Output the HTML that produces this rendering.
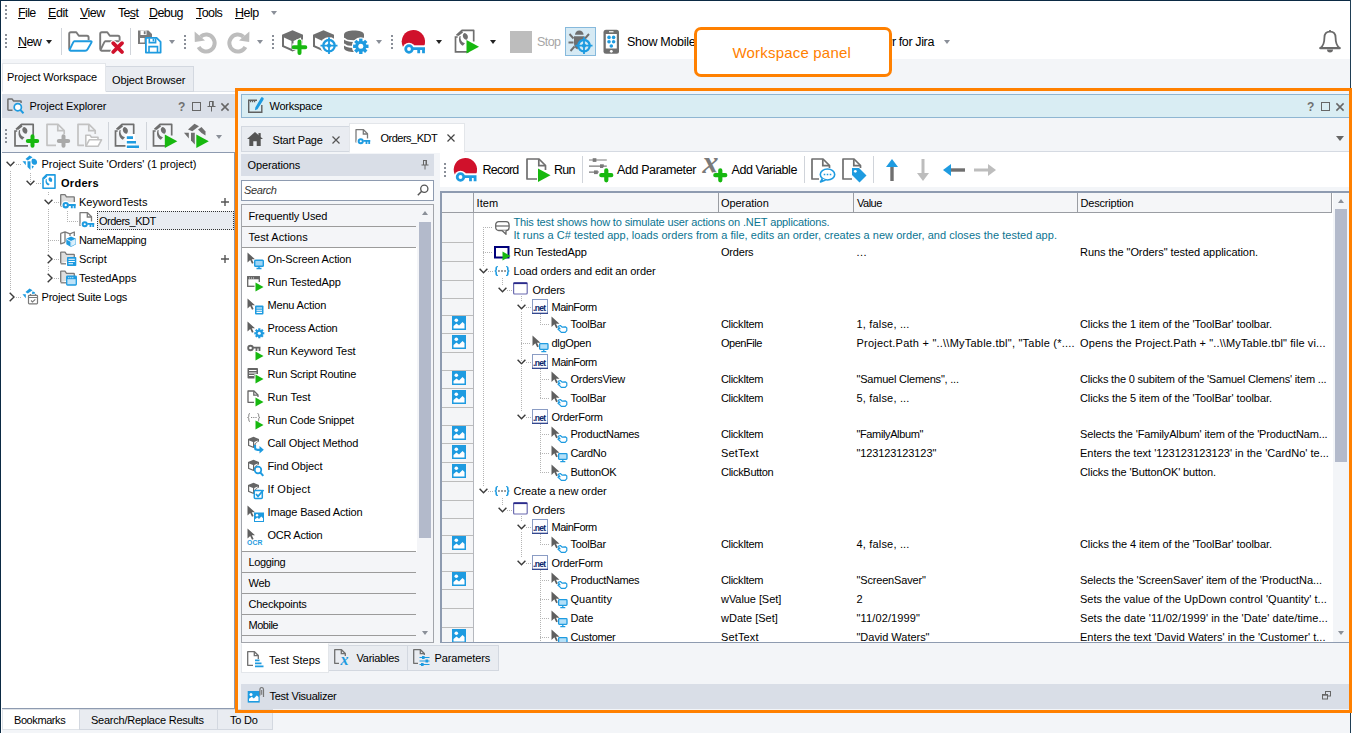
<!DOCTYPE html>
<html lang="en">
<head>
<meta charset="utf-8">
<title>Workspace panel</title>
<style>
*{box-sizing:border-box;margin:0;padding:0}
html,body{width:1352px;height:733px;overflow:hidden;background:#f3f5f8}
body{position:relative;font-family:"Liberation Sans",sans-serif;font-size:11px;color:#000;line-height:1}
.a{position:absolute}
.t{position:absolute;white-space:pre;line-height:14px;height:14px}
.m{font-size:12.5px;letter-spacing:-0.3px}
.ui{font-size:12.5px;letter-spacing:-0.3px}
svg{position:absolute;overflow:visible}
u{text-decoration:underline;text-underline-offset:1px}
.grip{position:absolute;width:2px;background-image:linear-gradient(#8a8f98 50%,transparent 50%);background-size:2px 4px}
.sep{position:absolute;width:1px;background:#d0d4da}
.dd{position:absolute;width:0;height:0;border-left:3.5px solid transparent;border-right:3.5px solid transparent;border-top:4px solid #222}
.dd.g{border-top-color:#8a8f98}
.hbar{position:absolute;background:#d9dee7}
.tab{position:absolute;background:#e9ecf1;border:1px solid #d3d8e0}
.tab.on{background:#fff;border-color:#e3e6ea;border-bottom-color:#fff}
.dot-h{position:absolute;height:1px;background-image:linear-gradient(90deg,#b4b4b4 50%,transparent 50%);background-size:2px 1px}
.dot-v{position:absolute;width:1px;background-image:linear-gradient(#b4b4b4 50%,transparent 50%);background-size:1px 2px}
.lsep{position:absolute;left:242px;width:174px;height:1px;background:#9b9b9b}
.gl{position:absolute;left:442px;width:31px;height:1px;background:#bcbcbc}
.c{color:#0b7491}
</style>
</head>
<body>
<!-- window frame -->
<div class="a" style="left:0;top:0;width:1352px;height:59px;background:#fff"></div>
<div class="a" style="left:0;top:0;width:1352px;height:1px;background:#0b2a44"></div>
<div class="a" style="left:0;top:0;width:1px;height:733px;background:#0b2a44"></div><div class="a" style="left:1px;top:1px;width:1px;height:732px;background:#fff"></div>
<div class="a" style="left:1350px;top:0;width:1px;height:733px;background:#1f3e55"></div><div class="a" style="left:1351px;top:0;width:1px;height:733px;background:#fff"></div>

<!-- MENU -->
<div id="menu">
<div class="grip" style="left:5px;top:5px;height:14px"></div>
<span class="t m" style="left:18px;top:6px;letter-spacing:-0.614px"><u>F</u>ile</span>
<span class="t m" style="left:48px;top:6px;letter-spacing:-0.462px"><u>E</u>dit</span>
<span class="t m" style="left:80px;top:6px;letter-spacing:-0.523px"><u>V</u>iew</span>
<span class="t m" style="left:118px;top:6px;letter-spacing:-0.700px">Te<u>s</u>t</span>
<span class="t m" style="left:149px;top:6px;letter-spacing:-0.569px"><u>D</u>ebug</span>
<span class="t m" style="left:196px;top:6px;letter-spacing:-0.588px"><u>T</u>ools</span>
<span class="t m" style="left:235px;top:6px;letter-spacing:-0.492px"><u>H</u>elp</span>
<div class="dd g" style="left:271px;top:11px"></div>
</div>

<!-- MAIN TOOLBAR -->
<div id="toolbar">
<div class="grip" style="left:5px;top:34px;height:16px"></div>
<span class="t m" style="left:18px;top:35px;letter-spacing:-0.589px"><u>N</u>ew</span>
<div class="dd" style="left:46px;top:40px"></div>
<div class="sep" style="left:61px;top:28px;height:27px"></div>
<div class="sep" style="left:130px;top:28px;height:27px"></div>
<!-- open folder -->
<svg style="left:68px;top:30px" width="25" height="24" viewBox="0 0 25 24"><path d="M1.2 19.5V3.8Q1.2 2.2 2.8 2.2H8.3L10.8 5.8H19Q20.6 5.800 20.6 7.4V10" fill="none" stroke="#7a7a7a" stroke-width="1.9" stroke-linejoin="round"/><path d="M6.3 11.2H22.6Q24.2 11.2 23.4 12.600L19.6 19.3Q18.800 20.7 17.2 20.7H2.6Q1 20.7 1.800 19.300L5.2 12.400Q5.800 11.200 6.3 11.200Z" fill="#fff" stroke="#1e9be0" stroke-width="1.9" stroke-linejoin="round"/></svg>
<!-- close folder -->
<svg style="left:99px;top:30px" width="25" height="24" viewBox="0 0 25 24"><path d="M1.2 19.5V3.8Q1.2 2.2 2.8 2.2H8.3L10.8 5.8H19Q20.6 5.800 20.6 7.4V10" fill="none" stroke="#7a7a7a" stroke-width="1.9" stroke-linejoin="round"/><path d="M12 20.700H2.6Q1 20.700 1.800 19.300L5.200 12.400Q5.800 11.200 6.300 11.200H22.600Q24.200 11.200 23.400 12.600" fill="none" stroke="#7a7a7a" stroke-width="1.9" stroke-linejoin="round"/><path d="M14.200 13.200L23 22M23 13.200L14.200 22" stroke="#fff" stroke-width="6" stroke-linecap="round"/><path d="M14.200 13.200L23 22M23 13.200L14.200 22" stroke="#d0112b" stroke-width="3.800" stroke-linecap="round"/></svg>
<!-- save all -->
<svg style="left:137px;top:29px" width="25" height="25" viewBox="0 0 25 25"><path d="M1 1.500H11.500L15 5V8H9V15H1Z" fill="#7a7a7a"/><rect x="3.500" y="1.500" width="6" height="4.500" fill="#fff"/><rect x="6.800" y="2.200" width="1.800" height="3" fill="#7a7a7a"/><rect x="3" y="9" width="4.500" height="4.500" fill="#fff"/><path d="M8.900 8.900H19.600L23.600 12.900V23.600H8.900Z" fill="#fff" stroke="#1e9be0" stroke-width="1.800" stroke-linejoin="round"/><path d="M12.300 9.500V13.600H18.600V9.500" fill="none" stroke="#1e9be0" stroke-width="1.600"/><rect x="15.600" y="9.800" width="1.600" height="2.600" fill="#1e9be0"/><path d="M12 23V17.600H20.500V23" fill="none" stroke="#1e9be0" stroke-width="1.600"/></svg>
<div class="dd g" style="left:169px;top:40px"></div>
<div class="grip" style="left:184px;top:35px;height:16px"></div>
<!-- undo -->
<svg style="left:194px;top:30px" width="24" height="24" viewBox="0 0 24 24"><path d="M6.500 6.700A8.500 8.500 0 1 1 4.600 17" fill="none" stroke="#bdbdbd" stroke-width="4"/><path d="M0.600 1.600L0.800 12L11 10.500Z" fill="#bdbdbd"/></svg>
<!-- redo -->
<svg style="left:226px;top:30px" width="24" height="24" viewBox="0 0 24 24"><g transform="translate(24,0) scale(-1,1)"><path d="M6.500 6.700A8.500 8.500 0 1 1 4.600 17" fill="none" stroke="#bdbdbd" stroke-width="4"/><path d="M0.600 1.600L0.800 12L11 10.500Z" fill="#bdbdbd"/></g></svg>
<div class="dd g" style="left:257px;top:40px"></div>
<div class="grip" style="left:272px;top:35px;height:16px"></div>
<!-- cube plus -->
<svg style="left:282px;top:30px" width="25" height="24" viewBox="0 0 25 24"><path d="M10.500 0.300L21 4.800V16.800L10.500 21.500L0 16.800V4.800Z" fill="#6f6f6f"/><path d="M2 7.600L9.500 10.900V18.700L2 15.400Z" fill="#fff"/><path d="M11.500 10.900L19 7.600V15.400L11.500 18.700Z" fill="#fff"/><path d="M17.500 9.500V24M10.300 16.800H24.700" stroke="#fff" stroke-width="6.500"/><path d="M17.500 11.500V23M11.700 17.200H23.300" stroke="#17b80f" stroke-width="4" stroke-linecap="round"/></svg>
<!-- cube target -->
<svg style="left:313px;top:30px" width="26" height="24" viewBox="0 0 26 24"><path d="M10.500 0.300L21 4.800V16.800L10.500 21.500L0 16.800V4.800Z" fill="#6f6f6f"/><path d="M2 7.600L9.500 10.900V18.700L2 15.400Z" fill="#fff"/><path d="M11.500 10.900L19 7.600V15.400L11.500 18.700Z" fill="#fff"/><circle cx="16" cy="15.700" r="8.800" fill="#fff"/><circle cx="16" cy="15.700" r="5.700" fill="#fff" stroke="#1e9be0" stroke-width="2.300"/><circle cx="16" cy="15.700" r="2.100" fill="#1e9be0"/><path d="M16 7.300V24M7.500 15.700H24.500" stroke="#1e9be0" stroke-width="1.800"/></svg>
<!-- db gear -->
<svg style="left:344px;top:30px" width="26" height="24" viewBox="0 0 26 24"><path d="M0 4.500C0 -1 20 -1 20 4.500V18C20 23.300 0 23.300 0 18Z" fill="#6f6f6f"/><path d="M0 8.200C2 12.200 18 12.200 20 8.200M0 14C2 18 18 18 20 14" fill="none" stroke="#fff" stroke-width="1.800"/><circle cx="16.800" cy="16.300" r="9" fill="#fff"/><g transform="translate(16.800,16.300)" fill="#1e9be0"><circle r="5.600"/><rect x="-1.700" y="-7.700" width="3.400" height="15.400"/><rect x="-1.700" y="-7.700" width="3.400" height="15.400" transform="rotate(45)"/><rect x="-1.700" y="-7.700" width="3.400" height="15.400" transform="rotate(90)"/><rect x="-1.700" y="-7.700" width="3.400" height="15.400" transform="rotate(135)"/><circle r="2.500" fill="#fff"/></g></svg>
<div class="dd g" style="left:376px;top:40px"></div>
<div class="grip" style="left:391px;top:35px;height:16px"></div>
<!-- record -->
<svg style="left:400px;top:30px" width="26" height="25" viewBox="0 0 26 25"><path d="M3 17A11.700 11.700 0 1 1 24 16.500Z" fill="#d0112b"/><circle cx="9" cy="19" r="6.300" fill="#fff"/><rect x="9" y="15.300" width="17" height="9" fill="#fff"/><circle cx="9" cy="19" r="3.300" fill="#fff" stroke="#1e9be0" stroke-width="2.800"/><path d="M13 18.600H25M18.700 18V23.300M23.500 18V23.300" stroke="#1e9be0" stroke-width="2.800"/></svg>
<div class="dd" style="left:436px;top:40px"></div>
<!-- run -->
<svg style="left:454px;top:29px" width="26" height="26" viewBox="0 0 26 26"><g transform="translate(0.5,0.5)"><path d="M14 22.300H1V7.500H3.200" fill="none" stroke="#6f6f6f" stroke-width="1.700"/><path d="M2 5.800L7.500 0.900H19.200V12" fill="none" stroke="#6f6f6f" stroke-width="1.700" stroke-linejoin="round"/><path d="M2.300 5.200L7.300 0.800L8.500 3L4 6.500Z" fill="#6f6f6f"/><path d="M10.300 3.500C13.500 4.500 14.300 8 12.300 10.200C10 10.200 8.300 8.500 8.300 6C8.300 4.800 9 3.800 10.300 3.500Z" fill="#6f6f6f"/><path d="M6.200 6.500C5.500 10 7 12.800 10.500 13.800L8.300 16.200C4.800 14.500 3.800 10.500 5 6.800Z" fill="#6f6f6f"/></g><path d="M12.500 11L25 17.800L12.500 24.600Z" fill="#17b80f"/></svg>
<div class="dd" style="left:490px;top:40px"></div>
<!-- stop -->
<div class="a" style="left:510px;top:31px;width:22px;height:22px;background:#bdbdbd"></div>
<span class="t m" style="left:537px;top:35px;color:#a6a6a6;letter-spacing:-0.580px">Stop</span>
<!-- bug -->
<div class="a" style="left:565px;top:27px;width:31px;height:29px;background:#d6eaf4;border:1px solid #86b9dc"></div>
<svg style="left:567px;top:30px" width="28" height="24" viewBox="0 0 28 24"><path d="M8 4.800A4.300 4.300 0 0 1 16.600 4.800Z" fill="#6f6f6f"/><path d="M7 6.300H17.600V12Q12 12 10.500 19.500Q7 18 7 13Z" fill="#6f6f6f"/><path d="M2.500 4L6.500 8.500M1.500 12.500H6.500M3.500 21L7.500 16.500M22 4L18 8.500" stroke="#6f6f6f" stroke-width="1.900" fill="none"/><circle cx="17" cy="15.700" r="5.700" fill="#d6eaf4" stroke="#1e9be0" stroke-width="2.300"/><circle cx="17" cy="15.700" r="2.100" fill="#1e9be0"/><path d="M17 7.300V24M8.500 15.700H25.500" stroke="#1e9be0" stroke-width="1.800"/></svg>
<!-- mobile -->
<svg style="left:603px;top:29px" width="17" height="26" viewBox="0 0 17 26"><rect x="0.500" y="0.800" width="15.500" height="24" rx="2.500" fill="#6f6f6f"/><rect x="2.800" y="5" width="11" height="14.500" fill="#fff"/><rect x="6" y="2.200" width="4.500" height="1.100" fill="#fff"/><circle cx="8.300" cy="22.300" r="1.400" fill="#fff"/><g fill="#1e9be0"><circle cx="6" cy="8.400" r="1.800"/><circle cx="10.600" cy="8.400" r="1.800"/><circle cx="6" cy="12.700" r="1.800"/><circle cx="10.600" cy="12.700" r="1.800"/><circle cx="8.300" cy="17" r="1.800"/></g></svg>
<span class="t m" style="left:627px;top:35px;letter-spacing:-0.286px">Show Mobile Screen</span>
<span class="t m" style="left:859px;top:35px;letter-spacing:-0.373px">Zephyr for Jira</span>
<div class="dd g" style="left:944px;top:40px"></div>
<!-- bell -->
<svg style="left:1317px;top:29px" width="26" height="25" viewBox="0 0 26 25"><path d="M13 1V3M3.400 19C7 16.500 7.400 12.500 7.400 8.800C7.400 4.800 9.800 2.700 13 2.700C16.200 2.700 18.600 4.800 18.600 8.800C18.600 12.500 19 16.500 22.600 19Z" fill="none" stroke="#6a6a6a" stroke-width="1.800" stroke-linejoin="round"/><path d="M3.400 19.200H22.600" stroke="#6a6a6a" stroke-width="2.200" stroke-linecap="round"/><path d="M10 20.500A3 3 0 0 0 16 20.500Z" fill="#6a6a6a"/></svg>

</div>

<div id="leftpanel">
<!-- top tabs -->
<div class="a" style="left:2px;top:91px;width:233px;height:1px;background:#dde1e7"></div>
<div class="tab" style="left:105px;top:66px;width:89px;height:26px"></div>
<div class="tab on" style="left:2px;top:63px;width:104px;height:29px"></div>
<span class="t" style="left:7px;top:70px;letter-spacing:-0.124px">Project Workspace</span>
<span class="t" style="left:112px;top:73px;letter-spacing:-0.140px">Object Browser</span>
<div class="a" style="left:2px;top:92px;width:233px;height:2px;background:#fff"></div>
<!-- header -->
<div class="hbar" style="left:2px;top:94px;width:233px;height:24px"></div>
<svg style="left:7px;top:98px" width="18" height="16" viewBox="0 0 18 16"><path d="M5.500 12.200H1.600Q0.900 12.200 0.900 11.500V1.600Q0.900 0.900 1.600 0.900H5L6.600 2.900H13.400Q14.100 2.900 14.100 3.600V5" fill="none" stroke="#6f6f6f" stroke-width="1.500"/><circle cx="10.800" cy="9.200" r="3.600" fill="#fff" stroke="#1e9be0" stroke-width="1.700"/><path d="M13.300 11.900L16.500 15.200" stroke="#1e9be0" stroke-width="2"/></svg>
<span class="t" style="left:29.500px;top:99px;letter-spacing:-0.095px">Project Explorer</span>
<span class="t" style="left:178px;top:100px;color:#707070;font-size:12px;font-weight:bold">?</span>
<div class="a" style="left:192px;top:102px;width:9px;height:9px;border:1px solid #666"></div>
<svg style="left:207px;top:101px" width="9" height="11" viewBox="0 0 9 11"><path d="M2.500 0.500H6.500M2.500 0.500V5.500M6 0.500V5.500M0.500 5.500H8.500M4.500 5.500V10.500" fill="none" stroke="#666" stroke-width="1"/><path d="M5 0.500H6.500V5.500H5Z" fill="#666"/></svg>
<svg style="left:221px;top:103px" width="8" height="8" viewBox="0 0 8 8"><path d="M0.400 0.400L7.600 7.600M7.600 0.400L0.400 7.600" stroke="#666" stroke-width="1.500"/></svg>
<!-- toolbar -->
<div class="grip" style="left:5px;top:129px;height:16px"></div>
<div class="sep" style="left:108px;top:122px;height:28px"></div>
<div class="sep" style="left:146px;top:122px;height:28px"></div>
<!--LPICONS_S--><svg style="left:14px;top:123px" width="26" height="26" viewBox="0 0 26 26"><g transform="translate(0,0.5)"><path d="M14 22.300H1V7.500H3.200" fill="none" stroke="#6f6f6f" stroke-width="1.700"/><path d="M2 5.800L7.500 0.900H19.200V12" fill="none" stroke="#6f6f6f" stroke-width="1.700" stroke-linejoin="round"/><path d="M2.300 5.200L7.300 0.800L8.500 3L4 6.500Z" fill="#6f6f6f"/><path d="M10.300 3.500C13.500 4.500 14.300 8 12.300 10.200C10 10.200 8.300 8.500 8.300 6C8.300 4.800 9 3.800 10.300 3.500Z" fill="#6f6f6f"/><path d="M6.200 6.500C5.500 10 7 12.800 10.500 13.800L8.300 16.200C4.800 14.500 3.800 10.500 5 6.800Z" fill="#6f6f6f"/></g><path d="M18.500 13.300V22.700M13.800 18H23.200" stroke="#17b80f" stroke-width="4" stroke-linecap="round"/></svg>
<svg style="left:46px;top:123px" width="26" height="26" viewBox="0 0 26 26"><path d="M10 22.300H1V1.300H12L18.200 7.500V11" fill="none" stroke="#c2c2c2" stroke-width="1.700" stroke-linejoin="round"/><path d="M11.800 1.500V7.700H18" fill="none" stroke="#c2c2c2" stroke-width="1.700"/><path d="M17.500 13.300V22.700M12.800 18H22.200" stroke="#a9a9a9" stroke-width="4" stroke-linecap="round"/></svg>
<svg style="left:77px;top:123px" width="26" height="26" viewBox="0 0 26 26"><path d="M7 22.300H1V1.300H12L18.200 7.500V11" fill="none" stroke="#c2c2c2" stroke-width="1.700" stroke-linejoin="round"/><path d="M11.800 1.500V7.700H18" fill="none" stroke="#c2c2c2" stroke-width="1.700"/><path d="M8.800 23V12.300H13L14.500 14.300H21V16.500" fill="#fff" stroke="#c2c2c2" stroke-width="1.600" stroke-linejoin="round"/><path d="M8.800 23.300L12.300 16.800H24.500L21 23.300Z" fill="#fff" stroke="#c2c2c2" stroke-width="1.600" stroke-linejoin="round"/></svg>
<svg style="left:114px;top:123px" width="26" height="26" viewBox="0 0 26 26"><g transform="translate(0.5,0.5)"><path d="M14 22.300H1V7.500H3.200" fill="none" stroke="#6f6f6f" stroke-width="1.700"/><path d="M2 5.800L7.500 0.900H19.200V12" fill="none" stroke="#6f6f6f" stroke-width="1.700" stroke-linejoin="round"/><path d="M2.300 5.200L7.300 0.800L8.500 3L4 6.500Z" fill="#6f6f6f"/><path d="M10.300 3.500C13.500 4.500 14.300 8 12.300 10.200C10 10.200 8.300 8.500 8.300 6C8.300 4.800 9 3.800 10.300 3.500Z" fill="#6f6f6f"/><path d="M6.200 6.500C5.500 10 7 12.800 10.500 13.800L8.300 16.200C4.800 14.500 3.800 10.500 5 6.800Z" fill="#6f6f6f"/></g><rect x="11.500" y="11" width="9.500" height="15" fill="#fff"/><path d="M12.800 14.600H19M12.800 19.200H22M12.800 23.800H25" stroke="#1e9be0" stroke-width="2.600"/></svg>
<svg style="left:152px;top:123px" width="26" height="26" viewBox="0 0 26 26"><g transform="translate(0.5,0.5)"><path d="M14 22.300H1V7.500H3.200" fill="none" stroke="#6f6f6f" stroke-width="1.700"/><path d="M2 5.800L7.500 0.900H19.200V12" fill="none" stroke="#6f6f6f" stroke-width="1.700" stroke-linejoin="round"/><path d="M2.300 5.200L7.300 0.800L8.500 3L4 6.500Z" fill="#6f6f6f"/><path d="M10.300 3.500C13.500 4.500 14.300 8 12.300 10.200C10 10.200 8.300 8.500 8.300 6C8.300 4.800 9 3.800 10.300 3.500Z" fill="#6f6f6f"/><path d="M6.200 6.500C5.500 10 7 12.800 10.500 13.800L8.300 16.200C4.800 14.500 3.800 10.500 5 6.800Z" fill="#6f6f6f"/></g><path d="M12.800 11.500L25.300 18.200L12.800 25Z" fill="#17b80f"/></svg>
<svg style="left:184px;top:123px" width="26" height="26" viewBox="0 0 26 26"><path d="M4 6.500L10.500 0.800L15 3.300L8.300 8.200Z" fill="#6f6f6f"/><path d="M0 9.800H4.800V15.500Z" fill="#6f6f6f"/><path d="M7 9.800H10.800V21.500L7 17.500Z" fill="#6f6f6f"/><path d="M14 6.500L17.500 4L21.500 8.500V12.500L17.500 10Z" fill="#6f6f6f"/><path d="M12.300 11.500L24.800 18.200L12.300 25Z" fill="#17b80f"/></svg><!--LPICONS_E-->
<div class="dd g" style="left:216px;top:135px"></div>
<!-- tree -->
<div class="a" style="left:2px;top:152px;width:233px;height:557px;background:#fff;border:1px solid #8e9bb0;border-left:none"></div>
<div class="dot-v" style="left:10px;top:171px;height:120px"></div>
<div class="dot-h" style="left:16px;top:164px;width:6px"></div>
<div class="dot-v" style="left:30px;top:173px;height:10px"></div>
<div class="dot-h" style="left:36px;top:183px;width:6px"></div>
<div class="dot-v" style="left:48px;top:192px;height:4px"></div>
<div class="dot-v" style="left:48px;top:209px;height:44px"></div>
<div class="dot-v" style="left:48px;top:266px;height:6px"></div>
<div class="dot-h" style="left:54px;top:202px;width:6px"></div>
<div class="dot-v" style="left:67px;top:211px;height:10px"></div>
<div class="dot-h" style="left:67px;top:221px;width:11px"></div>
<div class="dot-h" style="left:48px;top:240px;width:11px"></div>
<div class="dot-h" style="left:54px;top:259px;width:6px"></div>
<div class="dot-h" style="left:54px;top:278px;width:6px"></div>
<div class="dot-h" style="left:16px;top:297px;width:6px"></div>
<div class="a" style="left:97px;top:211px;width:137px;height:19px;background:#e9ecf1;border:1px dotted #333"></div>
<svg style="left:6px;top:161px" width="9" height="6" viewBox="0 0 9 6"><path d="M0.600 0.700L4.500 4.800L8.400 0.700" fill="none" stroke="#3c3c3c" stroke-width="1.400"/></svg>
<svg style="left:26px;top:180px" width="9" height="6" viewBox="0 0 9 6"><path d="M0.600 0.700L4.500 4.800L8.400 0.700" fill="none" stroke="#3c3c3c" stroke-width="1.400"/></svg>
<svg style="left:44px;top:199px" width="9" height="6" viewBox="0 0 9 6"><path d="M0.600 0.700L4.500 4.800L8.400 0.700" fill="none" stroke="#3c3c3c" stroke-width="1.400"/></svg>
<svg style="left:47px;top:254px" width="6" height="10" viewBox="0 0 6 10"><path d="M0.700 0.700L5 5L0.700 9.300" fill="none" stroke="#3c3c3c" stroke-width="1.400"/></svg>
<svg style="left:47px;top:273px" width="6" height="10" viewBox="0 0 6 10"><path d="M0.700 0.700L5 5L0.700 9.300" fill="none" stroke="#3c3c3c" stroke-width="1.400"/></svg>
<svg style="left:9px;top:292px" width="6" height="10" viewBox="0 0 6 10"><path d="M0.700 0.700L5 5L0.700 9.300" fill="none" stroke="#3c3c3c" stroke-width="1.400"/></svg>
<span class="t" style="left:41.5px;top:157px;letter-spacing:-0.024px">Project Suite 'Orders' (1 project)</span>
<span class="t" style="left:61px;top:176px;font-weight:bold;letter-spacing:0.287px">Orders</span>
<span class="t" style="left:79px;top:195px;letter-spacing:-0.007px">KeywordTests</span>
<span class="t" style="left:99px;top:214px;letter-spacing:-0.505px">Orders_KDT</span>
<span class="t" style="left:79px;top:233px;letter-spacing:-0.395px">NameMapping</span>
<span class="t" style="left:79px;top:252px;letter-spacing:-0.087px">Script</span>
<span class="t" style="left:79px;top:271px;letter-spacing:-0.008px">TestedApps</span>
<span class="t" style="left:41.5px;top:290px;letter-spacing:-0.205px">Project Suite Logs</span>
<svg style="left:220.5px;top:198px" width="8" height="8" viewBox="0 0 8 8"><path d="M4 0V8M0 4H8" stroke="#555" stroke-width="1.400"/></svg>
<svg style="left:220.5px;top:255px" width="8" height="8" viewBox="0 0 8 8"><path d="M4 0V8M0 4H8" stroke="#555" stroke-width="1.400"/></svg>
<!--TREEICONS_S--><svg style="left:22px;top:155px" width="16" height="16" viewBox="0 0 16 16"><path d="M3.500 4L7.500 0.500L10.500 2.300L5.800 5.500Z" fill="#1e9be0"/><path d="M0.500 6.200H3.800V10.300Z" fill="#1e9be0"/><path d="M5.500 6.200H8.500V15L5.500 12Z" fill="#1e9be0"/><path d="M10.300 3.800C13.500 3.300 15.500 5.500 15 8.300C14 10.200 11.500 10.500 10 8.500C9.300 7 9.300 5 10.300 3.800Z" fill="#1e9be0"/><path d="M9.800 10.500L12 11.500L10 13.800Z" fill="#1e9be0"/></svg>
<svg style="left:42px;top:174px" width="14" height="15" viewBox="0 0 14 15"><path d="M1 4.300L4.500 0.900H13V14.200H1Z" fill="#fff" stroke="#1e9be0" stroke-width="1.600" stroke-linejoin="round"/><path d="M1 4.300L4.500 0.900L5.300 2.500L2.300 5.300Z" fill="#1e9be0"/><path d="M7.800 3.300C10.300 3.800 10.800 6.300 9.500 8C7.800 8 6.500 6.800 6.500 5C6.500 4.200 7 3.500 7.800 3.300Z" fill="#1e9be0"/><path d="M4.800 5C4.300 7.500 5.300 9.300 7.800 10L6.300 11.500C3.800 10.500 3 7.800 3.800 5.200Z" fill="#1e9be0"/></svg>
<svg style="left:60px;top:194px" width="17" height="16" viewBox="0 0 17 16"><g transform="translate(0,0)"><path d="M0.700 11.800V1.200Q0.700 0.700 1.200 0.700H5L6.500 2.800H13.800Q14.300 2.800 14.300 3.300V8" fill="#dedede" stroke="#7a7a7a" stroke-width="1.300" stroke-linejoin="round"/><path d="M0.700 12.300H6" stroke="#7a7a7a" stroke-width="1.300"/></g><g transform="translate(2.3,7.8) scale(0.95)"><circle cx="3.600" cy="3.600" r="4.600" fill="#fff"/><rect x="6" y="0.500" width="9" height="6.500" fill="#fff"/><circle cx="3.600" cy="3.600" r="2.300" fill="#fff" stroke="#1e9be0" stroke-width="2.200"/><path d="M6.500 3.300H14.200M10 3V6.800M13 3V6.800" stroke="#1e9be0" stroke-width="2"/></g></svg>
<svg style="left:79px;top:212px" width="17" height="16" viewBox="0 0 17 16"><path d="M1 14V0.700H8.500L12.500 4.700V10" fill="#fff" stroke="#7a7a7a" stroke-width="1.300" stroke-linejoin="round"/><path d="M8.300 0.900V5H12.300" fill="none" stroke="#7a7a7a" stroke-width="1.300"/><g transform="translate(2.5,9) scale(0.9)"><circle cx="3.600" cy="3.600" r="4.600" fill="#fff"/><rect x="6" y="0.500" width="9" height="6.500" fill="#fff"/><circle cx="3.600" cy="3.600" r="2.300" fill="#fff" stroke="#1e9be0" stroke-width="2.200"/><path d="M6.500 3.300H14.200M10 3V6.800M13 3V6.800" stroke="#1e9be0" stroke-width="2"/></g></svg>
<svg style="left:60px;top:231px" width="17" height="17" viewBox="0 0 17 17"><path d="M0.700 2.300L5 0.800L10 2.800L14.300 1V5M0.700 2.300V12.800L5 11.300M5 0.800V11.300M10 2.800V5" fill="none" stroke="#7a7a7a" stroke-width="1.300" stroke-linejoin="round"/><path d="M11 5.500L16 7.800V13.300L11 16L6.300 13.300V7.800Z" fill="#1e9be0"/><path d="M6.800 8.300L11 10.500L15.500 8.300M11 10.500V15.500" fill="none" stroke="#fff" stroke-width="0.900"/><path d="M11.300 10.800L15.600 8.600V13L11.300 15.300Z" fill="#fff" opacity="0.850"/></svg>
<svg style="left:60px;top:251px" width="17" height="16" viewBox="0 0 17 16"><g transform="translate(0,0.5)"><path d="M0.700 11.800V1.200Q0.700 0.700 1.200 0.700H5L6.500 2.800H13.800Q14.300 2.800 14.300 3.300V8" fill="#dedede" stroke="#7a7a7a" stroke-width="1.300" stroke-linejoin="round"/><path d="M0.700 12.300H6" stroke="#7a7a7a" stroke-width="1.300"/></g><rect x="7" y="6" width="9.300" height="9" rx="0.800" fill="#1e9be0"/><path d="M8.500 8.300H14.800M8.500 10.500H14.800M8.500 12.700H13" stroke="#fff" stroke-width="1.100"/></svg>
<svg style="left:60px;top:270px" width="17" height="16" viewBox="0 0 17 16"><g transform="translate(0,0.5)"><path d="M0.700 11.800V1.200Q0.700 0.700 1.200 0.700H5L6.500 2.800H13.800Q14.300 2.800 14.300 3.300V8" fill="#dedede" stroke="#7a7a7a" stroke-width="1.300" stroke-linejoin="round"/><path d="M0.700 12.300H6" stroke="#7a7a7a" stroke-width="1.300"/></g><rect x="6.700" y="6.200" width="9.600" height="8.800" rx="0.800" fill="#bfe3f8" stroke="#1e9be0" stroke-width="1.300"/><rect x="6.700" y="6.200" width="9.600" height="3" fill="#1e9be0"/><path d="M8.300 7.700H9.300M10.300 7.700H11.300M12.300 7.700H13.300" stroke="#fff" stroke-width="1"/></svg>
<svg style="left:22px;top:288px" width="17" height="17" viewBox="0 0 17 17"><path d="M3.500 4L7.500 0.500L10.500 2.300L5.800 5.500Z" fill="#1e9be0"/><path d="M0.500 6.200H3.800V10.300Z" fill="#1e9be0"/><path d="M10.300 3.500C12 3.300 13 4.300 13.300 5.500L10 6Z" fill="#1e9be0"/><rect x="6.500" y="7.300" width="9" height="8.500" rx="0.800" fill="#fff" stroke="#7a7a7a" stroke-width="1.200"/><path d="M6.500 9.500H15.500M8.500 6V8M13.500 6V8" stroke="#7a7a7a" stroke-width="1.200"/><path d="M9 12.500L10.500 14L13.300 11.300" fill="none" stroke="#7a7a7a" stroke-width="1.100"/></svg><!--TREEICONS_E-->
</div>


<div id="workspace">
<!-- header -->
<div class="a" style="left:241px;top:94px;width:1108px;height:24px;background:#d9edf3;border:1px solid #8fb6d2;border-right:none"></div>
<svg style="left:248px;top:97px" width="16" height="16" viewBox="0 0 16 16"><path d="M9 3.200H0.700V15.300H13.800V8" fill="none" stroke="#606060" stroke-width="1.400"/><path d="M2 4.700H8" stroke="#606060" stroke-width="1.200" stroke-dasharray="1.200 0.800"/><path d="M13.300 0.300Q14.800 -0.300 15.600 1.200Q16 2 15.300 3L9.500 12.300L7 13.300L7.300 10.500Z" fill="#1e9be0"/></svg>
<span class="t" style="left:269.500px;top:99px;letter-spacing:-0.259px">Workspace</span>
<span class="t" style="left:1307px;top:100px;color:#707070;font-size:12px;font-weight:bold">?</span>
<div class="a" style="left:1321px;top:102px;width:9px;height:9px;border:1px solid #666"></div>
<svg style="left:1336px;top:103px" width="8" height="8" viewBox="0 0 8 8"><path d="M0.400 0.400L7.600 7.600M7.600 0.400L0.400 7.600" stroke="#666" stroke-width="1.500"/></svg>
<!-- doc tabs -->
<div class="a" style="left:241px;top:151px;width:1108px;height:1px;background:#d5dae2"></div>
<div class="a" style="left:440px;top:152px;width:909px;height:35px;background:#fff"></div>
<div class="tab" style="left:241px;top:126px;width:109px;height:26px"></div>
<div class="tab on" style="left:349px;top:123px;width:116px;height:30px"></div>
<svg style="left:247px;top:132px" width="16" height="14" viewBox="0 0 14 13" preserveAspectRatio="none"><path d="M7 0L14 6.500H12V13H8.500V8.500H5.500V13H2V6.500H0Z" fill="#555"/><rect x="10" y="1" width="2" height="4" fill="#555"/></svg>
<span class="t" style="left:272.500px;top:133px;letter-spacing:-0.173px">Start Page</span>
<svg style="left:332px;top:136px" width="8" height="8" viewBox="0 0 8 8"><path d="M0.500 0.500L7.500 7.500M7.500 0.500L0.500 7.500" stroke="#555" stroke-width="1.200"/></svg>
<svg style="left:355px;top:129px" width="17" height="16" viewBox="0 0 17 16"><path d="M1 13.500V0.700H8.500L12.500 4.700V10" fill="#fff" stroke="#7a7a7a" stroke-width="1.300" stroke-linejoin="round"/><path d="M8.300 0.900V5H12.300" fill="none" stroke="#7a7a7a" stroke-width="1.300"/><g transform="translate(2.500,9) scale(0.900)"><circle cx="3.600" cy="3.600" r="4.600" fill="#fff"/><rect x="6" y="0.500" width="9" height="6.500" fill="#fff"/><circle cx="3.600" cy="3.600" r="2.300" fill="#fff" stroke="#1e9be0" stroke-width="2.200"/><path d="M6.500 3.300H14.200M10 3V6.800M13 3V6.800" stroke="#1e9be0" stroke-width="2"/></g></svg>

<span class="t" style="left:380.500px;top:131px;letter-spacing:-0.505px">Orders_KDT</span>
<svg style="left:447px;top:134px" width="8" height="8" viewBox="0 0 8 8"><path d="M0.500 0.500L7.500 7.500M7.500 0.500L0.500 7.500" stroke="#444" stroke-width="1.200"/></svg>
<div class="dd" style="left:1336px;top:136px;border-top-color:#666;border-left-width:4.500px;border-right-width:4.500px;border-top-width:5px"></div>
<!-- Operations -->
<div class="hbar" style="left:241px;top:154px;width:193px;height:22px"></div>
<span class="t" style="left:247.500px;top:158px;letter-spacing:-0.106px">Operations</span>
<svg style="left:421px;top:160px" width="8" height="10" viewBox="0 0 8 10"><path d="M2 0.500H6M2.500 0.500V5M5.500 0.500V5M0.500 5H7.500M4 5V9.500" fill="none" stroke="#666" stroke-width="1"/><path d="M4.500 0.500H6V5H4.500Z" fill="#666"/></svg>
<div class="a" style="left:241px;top:180px;width:193px;height:21px;background:#fff;border:1px solid #8e9bb0"></div>
<span class="t" style="left:244px;top:183px;font-style:italic;color:#333;letter-spacing:-0.393px">Search</span>
<svg style="left:417px;top:184px" width="12" height="12" viewBox="0 0 12 12"><circle cx="7.300" cy="4.700" r="3.600" fill="none" stroke="#555" stroke-width="1.300"/><path d="M4.700 7.300L0.800 11.200" stroke="#555" stroke-width="1.500"/></svg>
<div class="a" style="left:241px;top:204px;width:193px;height:439px;background:#fff;border:1px solid #a2a5ab"></div><div class="a" style="left:242px;top:205px;width:191px;height:42px;background:#f4f5f8"></div><div class="a" style="left:242px;top:552px;width:191px;height:90px;background:#f4f5f8"></div><div class="a" style="left:417px;top:205px;width:16px;height:437px;background:#f4f5f8"></div>
<!--OPLIST_S--><span class="t" style="left:248.500px;top:209px;letter-spacing:-0.131px">Frequently Used</span>
<span class="t" style="left:248.500px;top:230px;letter-spacing:0.046px">Test Actions</span>
<div class="lsep" style="top:226px"></div>
<div class="lsep" style="top:247px"></div>
<div class="lsep" style="top:551px"></div>
<div class="lsep" style="top:572px"></div>
<div class="lsep" style="top:593px"></div>
<div class="lsep" style="top:614px"></div>
<div class="lsep" style="top:635px"></div>
<span class="t" style="left:248.500px;top:555px;letter-spacing:-0.344px">Logging</span>
<span class="t" style="left:248.500px;top:576px;letter-spacing:-0.224px">Web</span>
<span class="t" style="left:248.500px;top:597px;letter-spacing:-0.232px">Checkpoints</span>
<span class="t" style="left:248.500px;top:618px;letter-spacing:-0.484px">Mobile</span>
<span class="t" style="left:267.500px;top:252px;letter-spacing:-0.154px">On-Screen Action</span>
<svg style="left:247px;top:252px" width="17" height="18" viewBox="0 0 17 18"><path d="M0.500 0.500V10.500L3.200 8L5 11.800L6.600 11L4.800 7.300H8Z" fill="#5f5f5f"/><rect x="7.700" y="8.200" width="8.600" height="6" rx="0.800" fill="#9fd6f5" stroke="#1e9be0" stroke-width="1.400"/><path d="M12 14.500V16.200M9.500 16.500H14.500" stroke="#1e9be0" stroke-width="1.400"/></svg>
<span class="t" style="left:267.500px;top:275px;letter-spacing:-0.137px">Run TestedApp</span>
<svg style="left:247px;top:275px" width="17" height="18" viewBox="0 0 17 18"><rect x="0.700" y="1.700" width="11.600" height="9.600" fill="#fff" stroke="#666" stroke-width="1.300"/><rect x="0.700" y="1.700" width="11.600" height="2.600" fill="#666"/><path d="M2 3H3M4 3H5M6 3H7" stroke="#fff" stroke-width="0.800"/><rect x="7.500" y="7" width="6" height="5.500" fill="#fff"/><path d="M8.500 7.500L16.500 12L8.500 16.500Z" fill="#17b80f"/></svg>
<span class="t" style="left:267.500px;top:298px;letter-spacing:-0.177px">Menu Action</span>
<svg style="left:247px;top:298px" width="17" height="18" viewBox="0 0 17 18"><path d="M0.500 0.500V10.500L3.200 8L5 11.800L6.600 11L4.800 7.300H8Z" fill="#5f5f5f"/><rect x="8" y="7.500" width="8.500" height="9" rx="1" fill="#1e9be0"/><path d="M9.500 10H15M9.500 12.200H15M9.500 14.400H15" stroke="#fff" stroke-width="1.100"/></svg>
<span class="t" style="left:267.500px;top:321px;letter-spacing:-0.198px">Process Action</span>
<svg style="left:247px;top:321px" width="17" height="18" viewBox="0 0 17 18"><path d="M0.500 0.500V10.500L3.200 8L5 11.800L6.600 11L4.800 7.300H8Z" fill="#5f5f5f"/><g transform="translate(12.300,12.300)" fill="#1e9be0"><circle r="3.600"/><rect x="-1.100" y="-5" width="2.200" height="10"/><rect x="-1.100" y="-5" width="2.200" height="10" transform="rotate(45)"/><rect x="-1.100" y="-5" width="2.200" height="10" transform="rotate(90)"/><rect x="-1.100" y="-5" width="2.200" height="10" transform="rotate(135)"/><circle r="1.500" fill="#fff"/></g></svg>
<span class="t" style="left:267.500px;top:344px;letter-spacing:-0.061px">Run Keyword Test</span>
<svg style="left:247px;top:344px" width="17" height="18" viewBox="0 0 17 18"><circle cx="3.500" cy="4" r="2.300" fill="none" stroke="#666" stroke-width="1.900"/><path d="M6 3.700H13.500M9.500 3.500V7M12.500 3.500V7" stroke="#666" stroke-width="1.800"/><path d="M8.500 7.500L16.500 12L8.500 16.500Z" fill="#17b80f"/></svg>
<span class="t" style="left:267.500px;top:367px;letter-spacing:-0.202px">Run Script Routine</span>
<svg style="left:247px;top:367px" width="17" height="18" viewBox="0 0 17 18"><rect x="0.500" y="1" width="10.500" height="10.500" rx="0.800" fill="#666"/><path d="M2 3.500H9.500M2 6H9.500M2 8.500H7" stroke="#fff" stroke-width="1"/><rect x="7.500" y="7" width="5" height="5" fill="#fff"/><path d="M8.500 7.500L16.500 12L8.500 16.500Z" fill="#17b80f"/></svg>
<span class="t" style="left:267.500px;top:390px;letter-spacing:-0.027px">Run Test</span>
<svg style="left:247px;top:390px" width="17" height="18" viewBox="0 0 17 18"><path d="M7 12.300H1V1H7L11 5V7" fill="#fff" stroke="#666" stroke-width="1.300" stroke-linejoin="round"/><path d="M6.800 1.200V5.200H10.800" fill="none" stroke="#666" stroke-width="1.300"/><path d="M8.500 7.500L16.500 12L8.500 16.500Z" fill="#17b80f"/></svg>
<span class="t" style="left:267.500px;top:413px;letter-spacing:-0.225px">Run Code Snippet</span>
<svg style="left:247px;top:413px" width="17" height="18" viewBox="0 0 17 18"><path d="M3 0.500Q1.800 0.500 1.800 1.800V3.300Q1.800 4.500 0.600 4.500Q1.800 4.500 1.800 5.700V7.200Q1.800 8.500 3 8.500M10.500 0.500Q11.700 0.500 11.700 1.800V3.300Q11.700 4.500 12.900 4.500Q11.700 4.500 11.700 5.700V7.200Q11.700 8.500 10.500 8.500" fill="none" stroke="#888" stroke-width="1"/><path d="M4 4.500H5.200M6.200 4.500H7.400M8.400 4.500H9.600" stroke="#888" stroke-width="1.100"/><path d="M8.500 7.500L16.500 12L8.500 16.500Z" fill="#17b80f"/></svg>
<span class="t" style="left:267.500px;top:436px;letter-spacing:-0.153px">Call Object Method</span>
<svg style="left:247px;top:436px" width="17" height="18" viewBox="0 0 17 18"><path d="M6.500 0.800L12 3V5.500Q9 6 8.500 9V11.300L6.500 12L1 9.800V3Z" fill="#666"/><path d="M2.200 4.500L6 6V10.500L2.200 9Z" fill="#fff"/><path d="M7.200 6L10.800 4.500V5.300Q8 6.500 7.200 9.500Z" fill="#fff"/><path d="M8 9V11.500Q8 13.800 10.500 13.800H14" fill="none" stroke="#1e9be0" stroke-width="2.200"/><path d="M12.500 10L16.800 13.800L12.500 17.500Z" fill="#1e9be0"/></svg>
<span class="t" style="left:267.500px;top:459px;letter-spacing:-0.123px">Find Object</span>
<svg style="left:247px;top:459px" width="17" height="18" viewBox="0 0 17 18"><path d="M6.500 0.800L12 3V5.500Q9 6 8.500 9V11.300L6.500 12L1 9.800V3Z" fill="#666"/><path d="M2.200 4.500L6 6V10.500L2.200 9Z" fill="#fff"/><path d="M7.200 6L10.800 4.500V5.300Q8 6.500 7.200 9.500Z" fill="#fff"/><circle cx="11" cy="11" r="3.300" fill="#fff" stroke="#1e9be0" stroke-width="1.700"/><path d="M13.300 13.500L16.300 16.800" stroke="#1e9be0" stroke-width="2"/></svg>
<span class="t" style="left:267.500px;top:482px;letter-spacing:0.226px">If Object</span>
<svg style="left:247px;top:482px" width="17" height="18" viewBox="0 0 17 18"><path d="M6.500 0.800L12 3V5.500Q9 6 8.500 9V11.300L6.500 12L1 9.800V3Z" fill="#666"/><path d="M2.200 4.500L6 6V10.500L2.200 9Z" fill="#fff"/><path d="M7.200 6L10.800 4.500V5.300Q8 6.500 7.200 9.500Z" fill="#fff"/><rect x="7.300" y="8.500" width="8" height="8" rx="1" fill="#fff" stroke="#1e9be0" stroke-width="1.500"/><path d="M9 12L11 14.300L16.500 8" fill="none" stroke="#1e9be0" stroke-width="1.800"/></svg>
<span class="t" style="left:267.500px;top:505px;letter-spacing:-0.164px">Image Based Action</span>
<svg style="left:247px;top:505px" width="17" height="18" viewBox="0 0 17 18"><path d="M0.500 0.500V10.500L3.200 8L5 11.800L6.600 11L4.800 7.300H8Z" fill="#5f5f5f"/><rect x="7" y="7.500" width="10" height="9.500" fill="#1e9be0"/><circle cx="10" cy="10.300" r="1.200" fill="#fff"/><path d="M8 16V14.300L10.300 12.500L12 14L14.300 11.500L16 13.300V16Z" fill="#fff"/></svg>
<span class="t" style="left:267.500px;top:528px;letter-spacing:-0.257px">OCR Action</span>
<svg style="left:247px;top:528px" width="17" height="18" viewBox="0 0 17 18"><path d="M0.500 0.500V10.500L3.200 8L5 11.800L6.600 11L4.800 7.300H8Z" fill="#5f5f5f"/><text x="0" y="17.300" font-family="Liberation Sans,sans-serif" font-weight="bold" font-size="6.800" fill="#1e9be0" letter-spacing="0.200">OCR</text></svg>
<div class="a" style="left:419px;top:222px;width:12px;height:316px;background:#b3bacb"></div>
<div class="dd" style="left:422px;top:211px;border-top:none;border-bottom:4px solid #8a8f98"></div>
<div class="dd g" style="left:422px;top:631px"></div><!--OPLIST_E-->
<!-- editor toolbar -->
<div class="grip" style="left:444px;top:163px;height:16px"></div>
<!--EDTB_S--><!-- record -->
<svg style="left:452px;top:158px" width="26" height="25" viewBox="0 0 26 25"><path d="M3 17A11.700 11.700 0 1 1 24 16.500Z" fill="#d0112b"/><circle cx="8.500" cy="19" r="6.300" fill="#fff"/><rect x="9" y="15.300" width="17" height="9" fill="#fff"/><circle cx="8.500" cy="19" r="3.300" fill="#fff" stroke="#1e9be0" stroke-width="2.800"/><path d="M12.500 18.600H24.500M18.500 18V23.300M23.100 18V23.300" stroke="#1e9be0" stroke-width="2.800"/></svg>
<span class="t ui" style="left:482.500px;top:163px;letter-spacing:-0.700px">Record</span>
<!-- run -->
<svg style="left:526px;top:158px" width="25" height="24" viewBox="0 0 25 24"><path d="M11 21H1V1H13L19.500 7.500V12" fill="none" stroke="#6f6f6f" stroke-width="1.700" stroke-linejoin="round"/><path d="M12.800 1.200V7.700H19.300" fill="none" stroke="#6f6f6f" stroke-width="1.700"/><path d="M12 10.500L24.500 17.200L12 24Z" fill="#17b80f"/></svg>
<span class="t ui" style="left:554px;top:163px;letter-spacing:-0.700px">Run</span>
<div class="sep" style="left:582px;top:156px;height:27px"></div>
<!-- add parameter -->
<svg style="left:589px;top:158px" width="24" height="24" viewBox="0 0 24 24"><path d="M0 2H17.800M0 8.100H17.800M0 14.200H10" stroke="#7a7a7a" stroke-width="1.200"/><rect x="3.700" y="0.200" width="3.700" height="3.700" fill="#7a7a7a"/><rect x="11" y="6.300" width="3.800" height="3.700" fill="#7a7a7a"/><rect x="5" y="12.400" width="3.800" height="3.700" fill="#7a7a7a"/><path d="M17.300 9V25M9.500 17.200H25" stroke="#fff" stroke-width="6"/><path d="M17.300 12.300V22.300M12.300 17.200H22.300" stroke="#17b80f" stroke-width="4.200" stroke-linecap="round"/></svg>
<span class="t ui" style="left:617px;top:163px;letter-spacing:-0.391px">Add Parameter</span>
<!-- add variable -->
<svg style="left:703px;top:157px" width="25" height="25" viewBox="0 0 25 25"><text x="-0.500" y="16.300" font-family="Liberation Serif,serif" font-style="italic" font-weight="bold" font-size="32" fill="#7a7a7a">x</text><path d="M17.300 10V26M9.500 18.200H25" stroke="#fff" stroke-width="6"/><path d="M17.300 13.300V23.300M12.300 18.200H22.300" stroke="#17b80f" stroke-width="4.200" stroke-linecap="round"/></svg>
<span class="t ui" style="left:731.500px;top:163px;letter-spacing:-0.438px">Add Variable</span>
<div class="sep" style="left:804px;top:156px;height:27px"></div>
<!-- doc comment -->
<svg style="left:811px;top:158px" width="25" height="24" viewBox="0 0 25 24"><path d="M8 21H1V1H12L18.500 7.500V10" fill="none" stroke="#6f6f6f" stroke-width="1.700" stroke-linejoin="round"/><path d="M11.800 1.200V7.700H18.300" fill="none" stroke="#6f6f6f" stroke-width="1.700"/><ellipse cx="16.500" cy="16.500" rx="7.200" ry="5.500" fill="#fff" stroke="#1e9be0" stroke-width="1.600"/><path d="M11.500 20.500L9.500 24L14.500 22" fill="#fff" stroke="#1e9be0" stroke-width="1.600" stroke-linejoin="round"/><path d="M12.700 16.500H14.300M15.700 16.500H17.300M18.700 16.500H20.300" stroke="#1e9be0" stroke-width="1.700"/></svg>
<!-- doc tag -->
<svg style="left:842px;top:158px" width="25" height="24" viewBox="0 0 25 24"><path d="M10 21H1V1H12L18.500 7.500V10" fill="none" stroke="#6f6f6f" stroke-width="1.700" stroke-linejoin="round"/><path d="M11.800 1.200V7.700H18.300" fill="none" stroke="#6f6f6f" stroke-width="1.700"/><path d="M10 10H17L24.500 17.500L17.500 24.500L10 17Z" fill="#1e9be0"/><circle cx="13.300" cy="13.300" r="1.400" fill="#fff"/></svg>
<div class="sep" style="left:873px;top:156px;height:27px"></div>
<!-- arrows -->
<svg style="left:886px;top:159px" width="12" height="22" viewBox="0 0 12 22"><rect x="4.300" y="7" width="3.400" height="15" fill="#6f6f6f"/><path d="M6 0L12 8H0Z" fill="#1e9be0"/></svg>
<svg style="left:917px;top:159px" width="12" height="22" viewBox="0 0 12 22"><rect x="4.500" y="0" width="3" height="15" fill="#bdbdbd"/><path d="M6 22L12 14H0Z" fill="#bdbdbd"/></svg>
<svg style="left:943px;top:164px" width="22" height="12" viewBox="0 0 22 12"><rect x="7" y="4.300" width="15" height="3.400" fill="#6f6f6f"/><path d="M0 6L8 0V12Z" fill="#1e9be0"/></svg>
<svg style="left:974px;top:164px" width="22" height="12" viewBox="0 0 22 12"><rect x="0" y="4.500" width="15" height="3" fill="#bdbdbd"/><path d="M22 6L14 0V12Z" fill="#bdbdbd"/></svg>
<!--EDTB_E-->
<!-- grid -->
<!--GRID_S--><div class="a" style="left:440px;top:191px;width:909px;height:452px;background:#fff;border:2px solid #8e9bb0;border-right:none;border-bottom:1px solid #8e9bb0"></div>
<div class="a" style="left:442px;top:193px;width:32px;height:449px;background:#f4f5f7;border-right:1px solid #b5b8be"></div>
<div class="a" style="left:442px;top:193px;width:890px;height:20px;background:#f5f6f8;border-bottom:1px solid #9a9da3;border-right:1px solid #9a9da3"></div>
<div class="a" style="left:473px;top:193px;width:1px;height:20px;background:#9a9da3"></div>
<div class="a" style="left:718px;top:193px;width:1px;height:20px;background:#9a9da3"></div>
<div class="a" style="left:853px;top:193px;width:1px;height:20px;background:#9a9da3"></div>
<div class="a" style="left:1077px;top:193px;width:1px;height:20px;background:#9a9da3"></div>
<span class="t" style="left:476.5px;top:195.500px;letter-spacing:0.098px">Item</span>
<span class="t" style="left:721px;top:195.500px;letter-spacing:-0.068px">Operation</span>
<span class="t" style="left:857px;top:195.500px;letter-spacing:-0.506px">Value</span>
<span class="t" style="left:1080.5px;top:195.500px;letter-spacing:-0.185px">Description</span>
<div class="a" style="left:1333px;top:193px;width:16px;height:449px;background:#f3f5f8"></div>
<div class="a" style="left:1335px;top:209px;width:12px;height:253px;background:#b3bacb"></div>
<div class="dd" style="left:1337.500px;top:199px;border-top:none;border-bottom:4px solid #8a8f98"></div>
<div class="dd g" style="left:1337.500px;top:631px"></div>
<div class="gl" style="top:242px"></div>
<div class="gl" style="top:261px"></div>
<div class="gl" style="top:280px"></div>
<div class="gl" style="top:298px"></div>
<div class="gl" style="top:315px"></div>
<div class="gl" style="top:333px"></div>
<div class="gl" style="top:352px"></div>
<div class="gl" style="top:370px"></div>
<div class="gl" style="top:388px"></div>
<div class="gl" style="top:407px"></div>
<div class="gl" style="top:425px"></div>
<div class="gl" style="top:443px"></div>
<div class="gl" style="top:462px"></div>
<div class="gl" style="top:481px"></div>
<div class="gl" style="top:500px"></div>
<div class="gl" style="top:518px"></div>
<div class="gl" style="top:535px"></div>
<div class="gl" style="top:553px"></div>
<div class="gl" style="top:571px"></div>
<div class="gl" style="top:589px"></div>
<div class="gl" style="top:608px"></div>
<div class="gl" style="top:627px"></div>
<div class="a" style="left:442px;top:213px;width:891px;height:429px;overflow:hidden"><div class="a" style="left:-442px;top:-213px;width:1352px;height:733px">
<div class="dot-v" style="left:483px;top:227px;height:26px"></div>
<div class="dot-h" style="left:483px;top:227px;width:10px"></div>
<svg style="left:495px;top:221px" width="15" height="14" viewBox="0 0 15 14"><rect x="0.700" y="0.700" width="13.400" height="8.800" rx="3" fill="#fff" stroke="#666" stroke-width="1.300"/><path d="M0.700 5H14.100" stroke="#666" stroke-width="1.200"/><path d="M7 9.500L11 13.300V9.500" fill="#fff" stroke="#666" stroke-width="1.300" stroke-linejoin="round"/></svg>
<span class="t c" style="left:513.500px;top:215px;letter-spacing:-0.137px">This test shows how to simulate user actions on .NET applications.</span>
<span class="t c" style="left:513.500px;top:228px;letter-spacing:0.037px">It runs a C# tested app, loads orders from a file, edits an order, creates a new order, and closes the tested app.</span>
<svg style="left:494px;top:246px" width="17" height="15" viewBox="0 0 17 15"><rect x="1" y="1" width="13.500" height="10.500" fill="#fff" stroke="#00007a" stroke-width="2"/><path d="M8.500 5.500L16.500 10L8.500 14.500Z" fill="#17b80f"/></svg>
<span class="t" style="left:513.5px;top:245px;letter-spacing:-0.137px">Run TestedApp</span>
<span class="t" style="left:721px;top:245px;letter-spacing:-0.204px">Orders</span>
<span class="t" style="left:856.500px;top:245px;letter-spacing:0.476px">...</span>
<span class="t" style="left:1080px;top:245px;letter-spacing:-0.061px">Runs the &quot;Orders&quot; tested application.</span>
<svg style="left:478.5px;top:268px" width="9" height="6" viewBox="0 0 9 6"><path d="M0.600 0.700L4.500 4.800L8.400 0.700" fill="none" stroke="#3c3c3c" stroke-width="1.400"/></svg>
<svg style="left:494px;top:265px" width="16" height="12" viewBox="0 -1 16 16" preserveAspectRatio="none"><path d="M4 1Q2.200 1 2.200 2.800V5Q2.200 7 0.600 7Q2.200 7 2.200 9V11.200Q2.200 13 4 13M12 1Q13.800 1 13.800 2.800V5Q13.800 7 15.400 7Q13.800 7 13.800 9V11.200Q13.800 13 12 13" fill="none" stroke="#1e9be0" stroke-width="1.600"/><path d="M4.200 7H5.700M7.200 7H8.800M10.300 7H11.800" stroke="#5a5a5a" stroke-width="1.800"/></svg>
<span class="t" style="left:513.5px;top:264px;letter-spacing:-0.101px">Load orders and edit an order</span>
<svg style="left:497.5px;top:287px" width="9" height="6" viewBox="0 0 9 6"><path d="M0.600 0.700L4.500 4.800L8.400 0.700" fill="none" stroke="#3c3c3c" stroke-width="1.400"/></svg>
<svg style="left:513px;top:282px" width="15" height="13" viewBox="0 0 15 13"><rect x="0.600" y="0.600" width="13.600" height="11.400" rx="1" fill="#fff" stroke="#6a6ab0" stroke-width="1.200"/><rect x="0.600" y="0.600" width="13.600" height="1.500" fill="#2a2a8a"/></svg>
<span class="t" style="left:532.5px;top:283px;letter-spacing:-0.204px">Orders</span>
<svg style="left:517px;top:304px" width="9" height="6" viewBox="0 0 9 6"><path d="M0.600 0.700L4.500 4.800L8.400 0.700" fill="none" stroke="#3c3c3c" stroke-width="1.400"/></svg>
<svg style="left:532px;top:299px" width="16" height="15" viewBox="0 0 16 15"><rect x="0.500" y="0.500" width="15" height="14" fill="#fdfdff" stroke="#8a9cc4" stroke-width="1"/><path d="M0 14.300H16" stroke="#2a3f8a" stroke-width="1.200"/><text x="1" y="11.800" font-family="Liberation Sans,sans-serif" font-size="8.500" font-weight="bold" fill="#0a246a" letter-spacing="-0.650">.net</text></svg>
<span class="t" style="left:551.5px;top:300px;letter-spacing:-0.533px">MainForm</span>
<svg style="left:551px;top:316px" width="17" height="17" viewBox="0 0 17 17"><path d="M0.500 0.500V11L3.300 8.300L5.200 12.200L6.800 11.400L5 7.700H8.500Z" fill="#5f5f5f"/><path d="M7.200 10.300L9.300 9.500L11.300 11.200L14.300 10.800L15.800 12V14.600L14.200 16.300H10.300L8.800 14.800L7 13.300L7.600 12.300L9 12.800Z" fill="#fff" stroke="#1e9be0" stroke-width="1.200" stroke-linejoin="round"/></svg>
<span class="t" style="left:570.5px;top:317px;letter-spacing:-0.292px">ToolBar</span>
<span class="t" style="left:721px;top:317px;letter-spacing:-0.337px">ClickItem</span>
<span class="t" style="left:856.500px;top:317px;letter-spacing:0.181px">1, false, ...</span>
<span class="t" style="left:1080px;top:317px;letter-spacing:-0.071px">Clicks the 1 item of the &#x27;ToolBar&#x27; toolbar.</span>
<svg style="left:452px;top:316px" width="14" height="14" viewBox="0 0 14 14"><rect width="14" height="14" fill="#1e9be0"/><circle cx="4.300" cy="4.300" r="1.800" fill="#fff"/><path d="M1.500 12.500V10L4.500 7.500L7 9.500L10.500 6L12.500 8V12.500Z" fill="#fff"/></svg>
<svg style="left:532px;top:335px" width="17" height="18" viewBox="0 0 17 18"><path d="M0.500 0.500V11L3.300 8.300L5.200 12.200L6.800 11.400L5 7.700H8.500Z" fill="#5f5f5f"/><rect x="7.600" y="8.600" width="8.400" height="5.800" rx="0.800" fill="#b4e0f8" stroke="#1e9be0" stroke-width="1.300"/><path d="M11.800 14.600V16.300M9.300 16.700H14.300" stroke="#1e9be0" stroke-width="1.300"/></svg>
<span class="t" style="left:551.5px;top:336px;letter-spacing:-0.299px">dlgOpen</span>
<span class="t" style="left:721px;top:336px;letter-spacing:-0.480px">OpenFile</span>
<span class="t" style="left:856.500px;top:336px;letter-spacing:0.228px">Project.Path + &quot;..\\MyTable.tbl&quot;, &quot;Table (*....</span>
<span class="t" style="left:1080px;top:336px;letter-spacing:0.120px">Opens the Project.Path + &quot;..\\MyTable.tbl&quot; file vi...</span>
<svg style="left:452px;top:335px" width="14" height="14" viewBox="0 0 14 14"><rect width="14" height="14" fill="#1e9be0"/><circle cx="4.300" cy="4.300" r="1.800" fill="#fff"/><path d="M1.500 12.500V10L4.500 7.500L7 9.500L10.500 6L12.500 8V12.500Z" fill="#fff"/></svg>
<svg style="left:517px;top:359px" width="9" height="6" viewBox="0 0 9 6"><path d="M0.600 0.700L4.500 4.800L8.400 0.700" fill="none" stroke="#3c3c3c" stroke-width="1.400"/></svg>
<svg style="left:532px;top:354px" width="16" height="15" viewBox="0 0 16 15"><rect x="0.500" y="0.500" width="15" height="14" fill="#fdfdff" stroke="#8a9cc4" stroke-width="1"/><path d="M0 14.300H16" stroke="#2a3f8a" stroke-width="1.200"/><text x="1" y="11.800" font-family="Liberation Sans,sans-serif" font-size="8.500" font-weight="bold" fill="#0a246a" letter-spacing="-0.650">.net</text></svg>
<span class="t" style="left:551.5px;top:355px;letter-spacing:-0.533px">MainForm</span>
<svg style="left:551px;top:371px" width="17" height="17" viewBox="0 0 17 17"><path d="M0.500 0.500V11L3.300 8.300L5.200 12.200L6.800 11.400L5 7.700H8.500Z" fill="#5f5f5f"/><path d="M7.200 10.300L9.300 9.500L11.300 11.200L14.300 10.800L15.800 12V14.600L14.200 16.300H10.300L8.800 14.800L7 13.300L7.600 12.300L9 12.800Z" fill="#fff" stroke="#1e9be0" stroke-width="1.200" stroke-linejoin="round"/></svg>
<span class="t" style="left:570.5px;top:372px;letter-spacing:-0.277px">OrdersView</span>
<span class="t" style="left:721px;top:372px;letter-spacing:-0.337px">ClickItem</span>
<span class="t" style="left:856.500px;top:372px;letter-spacing:-0.217px">&quot;Samuel Clemens&quot;, ...</span>
<span class="t" style="left:1080px;top:372px;letter-spacing:-0.183px">Clicks the 0 subitem of the &#x27;Samuel Clemens&#x27; item ...</span>
<svg style="left:452px;top:371px" width="14" height="14" viewBox="0 0 14 14"><rect width="14" height="14" fill="#1e9be0"/><circle cx="4.300" cy="4.300" r="1.800" fill="#fff"/><path d="M1.500 12.500V10L4.500 7.500L7 9.500L10.500 6L12.500 8V12.500Z" fill="#fff"/></svg>
<svg style="left:551px;top:390px" width="17" height="17" viewBox="0 0 17 17"><path d="M0.500 0.500V11L3.300 8.300L5.200 12.200L6.800 11.400L5 7.700H8.500Z" fill="#5f5f5f"/><path d="M7.200 10.300L9.300 9.500L11.300 11.200L14.300 10.800L15.800 12V14.600L14.200 16.300H10.300L8.800 14.800L7 13.300L7.600 12.300L9 12.800Z" fill="#fff" stroke="#1e9be0" stroke-width="1.200" stroke-linejoin="round"/></svg>
<span class="t" style="left:570.5px;top:391px;letter-spacing:-0.292px">ToolBar</span>
<span class="t" style="left:721px;top:391px;letter-spacing:-0.337px">ClickItem</span>
<span class="t" style="left:856.500px;top:391px;letter-spacing:0.181px">5, false, ...</span>
<span class="t" style="left:1080px;top:391px;letter-spacing:-0.071px">Clicks the 5 item of the &#x27;ToolBar&#x27; toolbar.</span>
<svg style="left:452px;top:390px" width="14" height="14" viewBox="0 0 14 14"><rect width="14" height="14" fill="#1e9be0"/><circle cx="4.300" cy="4.300" r="1.800" fill="#fff"/><path d="M1.500 12.500V10L4.500 7.500L7 9.500L10.500 6L12.500 8V12.500Z" fill="#fff"/></svg>
<svg style="left:517px;top:414px" width="9" height="6" viewBox="0 0 9 6"><path d="M0.600 0.700L4.500 4.800L8.400 0.700" fill="none" stroke="#3c3c3c" stroke-width="1.400"/></svg>
<svg style="left:532px;top:409px" width="16" height="15" viewBox="0 0 16 15"><rect x="0.500" y="0.500" width="15" height="14" fill="#fdfdff" stroke="#8a9cc4" stroke-width="1"/><path d="M0 14.300H16" stroke="#2a3f8a" stroke-width="1.200"/><text x="1" y="11.800" font-family="Liberation Sans,sans-serif" font-size="8.500" font-weight="bold" fill="#0a246a" letter-spacing="-0.650">.net</text></svg>
<span class="t" style="left:551.5px;top:410px;letter-spacing:-0.281px">OrderForm</span>
<svg style="left:551px;top:426px" width="17" height="17" viewBox="0 0 17 17"><path d="M0.500 0.500V11L3.300 8.300L5.200 12.200L6.800 11.400L5 7.700H8.500Z" fill="#5f5f5f"/><path d="M7.200 10.300L9.300 9.500L11.300 11.200L14.300 10.800L15.800 12V14.600L14.200 16.300H10.300L8.800 14.800L7 13.300L7.600 12.300L9 12.800Z" fill="#fff" stroke="#1e9be0" stroke-width="1.200" stroke-linejoin="round"/></svg>
<span class="t" style="left:570.5px;top:427px;letter-spacing:-0.339px">ProductNames</span>
<span class="t" style="left:721px;top:427px;letter-spacing:-0.337px">ClickItem</span>
<span class="t" style="left:856.500px;top:427px;letter-spacing:-0.376px">&quot;FamilyAlbum&quot;</span>
<span class="t" style="left:1080px;top:427px;letter-spacing:-0.147px">Selects the &#x27;FamilyAlbum&#x27; item of the &#x27;ProductNam...</span>
<svg style="left:452px;top:426px" width="14" height="14" viewBox="0 0 14 14"><rect width="14" height="14" fill="#1e9be0"/><circle cx="4.300" cy="4.300" r="1.800" fill="#fff"/><path d="M1.500 12.500V10L4.500 7.500L7 9.500L10.500 6L12.500 8V12.500Z" fill="#fff"/></svg>
<svg style="left:551px;top:445px" width="17" height="18" viewBox="0 0 17 18"><path d="M0.500 0.500V11L3.300 8.300L5.200 12.200L6.800 11.400L5 7.700H8.500Z" fill="#5f5f5f"/><rect x="7.600" y="8.600" width="8.400" height="5.800" rx="0.800" fill="#b4e0f8" stroke="#1e9be0" stroke-width="1.300"/><path d="M11.800 14.600V16.300M9.300 16.700H14.300" stroke="#1e9be0" stroke-width="1.300"/></svg>
<span class="t" style="left:570.5px;top:446px;letter-spacing:-0.368px">CardNo</span>
<span class="t" style="left:721px;top:446px;letter-spacing:0.145px">SetText</span>
<span class="t" style="left:856.500px;top:446px;letter-spacing:-0.110px">&quot;123123123123&quot;</span>
<span class="t" style="left:1080px;top:446px;letter-spacing:0.015px">Enters the text &#x27;123123123123&#x27; in the &#x27;CardNo&#x27; te...</span>
<svg style="left:452px;top:445px" width="14" height="14" viewBox="0 0 14 14"><rect width="14" height="14" fill="#1e9be0"/><circle cx="4.300" cy="4.300" r="1.800" fill="#fff"/><path d="M1.500 12.500V10L4.500 7.500L7 9.500L10.500 6L12.500 8V12.500Z" fill="#fff"/></svg>
<svg style="left:551px;top:464px" width="17" height="17" viewBox="0 0 17 17"><path d="M0.500 0.500V11L3.300 8.300L5.200 12.200L6.800 11.400L5 7.700H8.500Z" fill="#5f5f5f"/><path d="M7.200 10.300L9.300 9.500L11.300 11.200L14.300 10.800L15.800 12V14.600L14.200 16.300H10.300L8.800 14.800L7 13.300L7.600 12.300L9 12.800Z" fill="#fff" stroke="#1e9be0" stroke-width="1.200" stroke-linejoin="round"/></svg>
<span class="t" style="left:570.5px;top:465px;letter-spacing:-0.225px">ButtonOK</span>
<span class="t" style="left:721px;top:465px;letter-spacing:-0.295px">ClickButton</span>
<span class="t" style="left:1080px;top:465px;letter-spacing:-0.118px">Clicks the &#x27;ButtonOK&#x27; button.</span>
<svg style="left:452px;top:464px" width="14" height="14" viewBox="0 0 14 14"><rect width="14" height="14" fill="#1e9be0"/><circle cx="4.300" cy="4.300" r="1.800" fill="#fff"/><path d="M1.500 12.500V10L4.500 7.500L7 9.500L10.500 6L12.500 8V12.500Z" fill="#fff"/></svg>
<svg style="left:478.5px;top:488px" width="9" height="6" viewBox="0 0 9 6"><path d="M0.600 0.700L4.500 4.800L8.400 0.700" fill="none" stroke="#3c3c3c" stroke-width="1.400"/></svg>
<svg style="left:494px;top:485px" width="16" height="12" viewBox="0 -1 16 16" preserveAspectRatio="none"><path d="M4 1Q2.200 1 2.200 2.800V5Q2.200 7 0.600 7Q2.200 7 2.200 9V11.200Q2.200 13 4 13M12 1Q13.800 1 13.800 2.800V5Q13.800 7 15.400 7Q13.800 7 13.800 9V11.200Q13.800 13 12 13" fill="none" stroke="#1e9be0" stroke-width="1.600"/><path d="M4.200 7H5.700M7.200 7H8.800M10.300 7H11.800" stroke="#5a5a5a" stroke-width="1.800"/></svg>
<span class="t" style="left:513.5px;top:484px;letter-spacing:-0.054px">Create a new order</span>
<svg style="left:497.5px;top:507px" width="9" height="6" viewBox="0 0 9 6"><path d="M0.600 0.700L4.500 4.800L8.400 0.700" fill="none" stroke="#3c3c3c" stroke-width="1.400"/></svg>
<svg style="left:513px;top:502px" width="15" height="13" viewBox="0 0 15 13"><rect x="0.600" y="0.600" width="13.600" height="11.400" rx="1" fill="#fff" stroke="#6a6ab0" stroke-width="1.200"/><rect x="0.600" y="0.600" width="13.600" height="1.500" fill="#2a2a8a"/></svg>
<span class="t" style="left:532.5px;top:503px;letter-spacing:-0.204px">Orders</span>
<svg style="left:517px;top:524px" width="9" height="6" viewBox="0 0 9 6"><path d="M0.600 0.700L4.500 4.800L8.400 0.700" fill="none" stroke="#3c3c3c" stroke-width="1.400"/></svg>
<svg style="left:532px;top:519px" width="16" height="15" viewBox="0 0 16 15"><rect x="0.500" y="0.500" width="15" height="14" fill="#fdfdff" stroke="#8a9cc4" stroke-width="1"/><path d="M0 14.300H16" stroke="#2a3f8a" stroke-width="1.200"/><text x="1" y="11.800" font-family="Liberation Sans,sans-serif" font-size="8.500" font-weight="bold" fill="#0a246a" letter-spacing="-0.650">.net</text></svg>
<span class="t" style="left:551.5px;top:520px;letter-spacing:-0.533px">MainForm</span>
<svg style="left:551px;top:536px" width="17" height="17" viewBox="0 0 17 17"><path d="M0.500 0.500V11L3.300 8.300L5.200 12.200L6.800 11.400L5 7.700H8.500Z" fill="#5f5f5f"/><path d="M7.200 10.300L9.300 9.500L11.300 11.200L14.300 10.800L15.800 12V14.600L14.200 16.300H10.300L8.800 14.800L7 13.300L7.600 12.300L9 12.800Z" fill="#fff" stroke="#1e9be0" stroke-width="1.200" stroke-linejoin="round"/></svg>
<span class="t" style="left:570.5px;top:537px;letter-spacing:-0.292px">ToolBar</span>
<span class="t" style="left:721px;top:537px;letter-spacing:-0.337px">ClickItem</span>
<span class="t" style="left:856.500px;top:537px;letter-spacing:0.181px">4, false, ...</span>
<span class="t" style="left:1080px;top:537px;letter-spacing:-0.071px">Clicks the 4 item of the &#x27;ToolBar&#x27; toolbar.</span>
<svg style="left:452px;top:536px" width="14" height="14" viewBox="0 0 14 14"><rect width="14" height="14" fill="#1e9be0"/><circle cx="4.300" cy="4.300" r="1.800" fill="#fff"/><path d="M1.500 12.500V10L4.500 7.500L7 9.500L10.500 6L12.500 8V12.500Z" fill="#fff"/></svg>
<svg style="left:517px;top:560px" width="9" height="6" viewBox="0 0 9 6"><path d="M0.600 0.700L4.500 4.800L8.400 0.700" fill="none" stroke="#3c3c3c" stroke-width="1.400"/></svg>
<svg style="left:532px;top:555px" width="16" height="15" viewBox="0 0 16 15"><rect x="0.500" y="0.500" width="15" height="14" fill="#fdfdff" stroke="#8a9cc4" stroke-width="1"/><path d="M0 14.300H16" stroke="#2a3f8a" stroke-width="1.200"/><text x="1" y="11.800" font-family="Liberation Sans,sans-serif" font-size="8.500" font-weight="bold" fill="#0a246a" letter-spacing="-0.650">.net</text></svg>
<span class="t" style="left:551.5px;top:556px;letter-spacing:-0.281px">OrderForm</span>
<svg style="left:551px;top:572px" width="17" height="17" viewBox="0 0 17 17"><path d="M0.500 0.500V11L3.300 8.300L5.200 12.200L6.800 11.400L5 7.700H8.500Z" fill="#5f5f5f"/><path d="M7.200 10.300L9.300 9.500L11.300 11.200L14.300 10.800L15.800 12V14.600L14.200 16.300H10.300L8.800 14.800L7 13.300L7.600 12.300L9 12.800Z" fill="#fff" stroke="#1e9be0" stroke-width="1.200" stroke-linejoin="round"/></svg>
<span class="t" style="left:570.5px;top:573px;letter-spacing:-0.339px">ProductNames</span>
<span class="t" style="left:721px;top:573px;letter-spacing:-0.337px">ClickItem</span>
<span class="t" style="left:856.500px;top:573px;letter-spacing:-0.170px">&quot;ScreenSaver&quot;</span>
<span class="t" style="left:1080px;top:573px;letter-spacing:-0.080px">Selects the &#x27;ScreenSaver&#x27; item of the &#x27;ProductNa...</span>
<svg style="left:452px;top:572px" width="14" height="14" viewBox="0 0 14 14"><rect width="14" height="14" fill="#1e9be0"/><circle cx="4.300" cy="4.300" r="1.800" fill="#fff"/><path d="M1.500 12.500V10L4.500 7.500L7 9.500L10.500 6L12.500 8V12.500Z" fill="#fff"/></svg>
<svg style="left:551px;top:591px" width="17" height="18" viewBox="0 0 17 18"><path d="M0.500 0.500V11L3.300 8.300L5.200 12.200L6.800 11.400L5 7.700H8.500Z" fill="#5f5f5f"/><rect x="7.600" y="8.600" width="8.400" height="5.800" rx="0.800" fill="#b4e0f8" stroke="#1e9be0" stroke-width="1.300"/><path d="M11.800 14.600V16.300M9.300 16.700H14.300" stroke="#1e9be0" stroke-width="1.300"/></svg>
<span class="t" style="left:570.5px;top:592px;letter-spacing:0.066px">Quantity</span>
<span class="t" style="left:721px;top:592px;letter-spacing:-0.063px">wValue [Set]</span>
<span class="t" style="left:856.500px;top:592px">2</span>
<span class="t" style="left:1080px;top:592px;letter-spacing:0.034px">Sets the value of the UpDown control &#x27;Quantity&#x27; t...</span>
<svg style="left:551px;top:610px" width="17" height="18" viewBox="0 0 17 18"><path d="M0.500 0.500V11L3.300 8.300L5.200 12.200L6.800 11.400L5 7.700H8.500Z" fill="#5f5f5f"/><rect x="7.600" y="8.600" width="8.400" height="5.800" rx="0.800" fill="#b4e0f8" stroke="#1e9be0" stroke-width="1.300"/><path d="M11.800 14.600V16.300M9.300 16.700H14.300" stroke="#1e9be0" stroke-width="1.300"/></svg>
<span class="t" style="left:570.5px;top:611px;letter-spacing:-0.112px">Date</span>
<span class="t" style="left:721px;top:611px;letter-spacing:-0.005px">wDate [Set]</span>
<span class="t" style="left:856.500px;top:611px;letter-spacing:0.129px">&quot;11/02/1999&quot;</span>
<span class="t" style="left:1080px;top:611px;letter-spacing:0.067px">Sets the date &#x27;11/02/1999&#x27; in the &#x27;Date&#x27; date/time...</span>
<svg style="left:551px;top:629px" width="17" height="18" viewBox="0 0 17 18"><path d="M0.500 0.500V11L3.300 8.300L5.200 12.200L6.800 11.400L5 7.700H8.500Z" fill="#5f5f5f"/><rect x="7.600" y="8.600" width="8.400" height="5.800" rx="0.800" fill="#b4e0f8" stroke="#1e9be0" stroke-width="1.300"/><path d="M11.800 14.600V16.300M9.300 16.700H14.300" stroke="#1e9be0" stroke-width="1.300"/></svg>
<span class="t" style="left:570.5px;top:630px;letter-spacing:-0.348px">Customer</span>
<span class="t" style="left:721px;top:630px;letter-spacing:0.145px">SetText</span>
<span class="t" style="left:856.500px;top:630px;letter-spacing:-0.030px">&quot;David Waters&quot;</span>
<span class="t" style="left:1080px;top:630px;letter-spacing:0.029px">Enters the text &#x27;David Waters&#x27; in the &#x27;Customer&#x27; t...</span>
<svg style="left:452px;top:629px" width="14" height="14" viewBox="0 0 14 14"><rect width="14" height="14" fill="#1e9be0"/><circle cx="4.300" cy="4.300" r="1.800" fill="#fff"/><path d="M1.500 12.500V10L4.500 7.500L7 9.500L10.500 6L12.500 8V12.500Z" fill="#fff"/></svg>
<div class="dot-h" style="left:483px;top:252px;width:10px"></div>
<div class="dot-v" style="left:483px;top:253px;height:13px"></div>
<div class="dot-v" style="left:483px;top:277px;height:209px"></div>
<div class="dot-h" style="left:488px;top:271px;width:5px"></div>
<div class="dot-h" style="left:488px;top:491px;width:5px"></div>
<div class="dot-v" style="left:502px;top:278px;height:7px"></div>
<div class="dot-h" style="left:507px;top:290px;width:5px"></div>
<div class="dot-v" style="left:502px;top:498px;height:7px"></div>
<div class="dot-h" style="left:507px;top:510px;width:5px"></div>
<div class="dot-v" style="left:521px;top:296px;height:6px"></div>
<div class="dot-v" style="left:521px;top:312px;height:100px"></div>
<div class="dot-h" style="left:526px;top:307px;width:5px"></div>
<div class="dot-h" style="left:521px;top:343px;width:10px"></div>
<div class="dot-h" style="left:526px;top:362px;width:5px"></div>
<div class="dot-h" style="left:526px;top:417px;width:5px"></div>
<div class="dot-v" style="left:540px;top:314px;height:10px"></div>
<div class="dot-h" style="left:540px;top:324px;width:10px"></div>
<div class="dot-v" style="left:540px;top:369px;height:29px"></div>
<div class="dot-h" style="left:540px;top:379px;width:10px"></div>
<div class="dot-h" style="left:540px;top:398px;width:10px"></div>
<div class="dot-v" style="left:540px;top:424px;height:48px"></div>
<div class="dot-h" style="left:540px;top:434px;width:10px"></div>
<div class="dot-h" style="left:540px;top:453px;width:10px"></div>
<div class="dot-h" style="left:540px;top:472px;width:10px"></div>
<div class="dot-v" style="left:521px;top:516px;height:6px"></div>
<div class="dot-h" style="left:526px;top:527px;width:5px"></div>
<div class="dot-v" style="left:521px;top:532px;height:26px"></div>
<div class="dot-h" style="left:526px;top:563px;width:5px"></div>
<div class="dot-v" style="left:540px;top:534px;height:10px"></div>
<div class="dot-h" style="left:540px;top:544px;width:10px"></div>
<div class="dot-v" style="left:540px;top:570px;height:72px"></div>
<div class="dot-h" style="left:540px;top:580px;width:10px"></div>
<div class="dot-h" style="left:540px;top:599px;width:10px"></div>
<div class="dot-h" style="left:540px;top:618px;width:10px"></div>
<div class="dot-h" style="left:540px;top:637px;width:10px"></div>
</div></div><!--GRID_E-->
<!-- bottom tabs -->
<div class="tab" style="left:328px;top:645px;width:80px;height:26px"></div>
<div class="tab" style="left:407px;top:645px;width:92px;height:26px"></div>
<div class="tab on" style="left:241px;top:643px;width:88px;height:30px;border-color:#e3e6ea;border-top-color:#fff"></div>
<span class="t" style="left:269px;top:653px;letter-spacing:-0.011px">Test Steps</span>
<span class="t" style="left:356.500px;top:651px;letter-spacing:-0.255px">Variables</span>
<span class="t" style="left:434.500px;top:651px;letter-spacing:-0.111px">Parameters</span>
<svg style="left:247px;top:651px" width="17" height="17" viewBox="0 0 17 17"><path d="M6 14.300H0.700V0.700H7.500L11.300 4.500V8" fill="#fff" stroke="#6f6f6f" stroke-width="1.300" stroke-linejoin="round"/><path d="M7.300 0.900V4.700H11.100" fill="none" stroke="#6f6f6f" stroke-width="1.300"/><path d="M8 9.300H12.500M8 12.300H14.500M8 15.300H16.500" stroke="#1e9be0" stroke-width="1.700"/></svg>
<svg style="left:334px;top:649px" width="17" height="17" viewBox="0 0 17 17"><path d="M5 14.300H0.700V0.700H7.500L11.300 4.500V7" fill="none" stroke="#6f6f6f" stroke-width="1.300" stroke-linejoin="round"/><path d="M7.300 0.900V4.700H11.100" fill="none" stroke="#6f6f6f" stroke-width="1.300"/><text x="6.500" y="15.500" font-family="Liberation Serif,serif" font-style="italic" font-weight="bold" font-size="16" fill="#1e9be0">x</text></svg>
<svg style="left:413px;top:649px" width="17" height="17" viewBox="0 0 17 17"><path d="M5 14.300H0.700V0.700H7.500L11.300 4.500V6" fill="none" stroke="#6f6f6f" stroke-width="1.300" stroke-linejoin="round"/><path d="M7.300 0.900V4.700H11.100" fill="none" stroke="#6f6f6f" stroke-width="1.300"/><path d="M6.500 8.500H16.500M6.500 12H16.500M6.500 15.500H16.500" stroke="#1e9be0" stroke-width="1.200"/><rect x="9" y="7" width="2.600" height="3" fill="#1e9be0"/><rect x="12.500" y="10.500" width="2.600" height="3" fill="#1e9be0"/><rect x="8" y="14" width="2.600" height="3" fill="#1e9be0"/></svg>

<!-- test visualizer -->
<div class="hbar" style="left:241px;top:684px;width:1108px;height:25px"></div>
<span class="t" style="left:269.500px;top:689px;letter-spacing:-0.248px">Test Visualizer</span>
<svg style="left:1322px;top:691px" width="10" height="9" viewBox="0 0 10 9"><rect x="3.500" y="0.500" width="5" height="4.500" fill="none" stroke="#666" stroke-width="1"/><rect x="0.500" y="3.500" width="5" height="4.500" fill="#d9dee7" stroke="#666" stroke-width="1"/><rect x="0.500" y="3.500" width="5" height="1.200" fill="#666"/></svg>
<svg style="left:247px;top:686px" width="18" height="17" viewBox="0 0 18 17"><rect x="0.700" y="5" width="12" height="11.600" fill="#1e9be0"/><circle cx="4" cy="8.500" r="1.500" fill="#fff"/><path d="M2 15V12.800L4.800 10.800L6.800 12.500L9.800 9.500L11.500 11V15Z" fill="#fff"/><path d="M12.900 9.500V3.800Q12.900 1.500 14.700 1.500Q16.500 1.500 16.500 3.800V11" fill="none" stroke="#777" stroke-width="1.200"/><path d="M14.700 4V8.800" stroke="#777" stroke-width="1.100"/></svg>

</div>


<div id="bottomtabs">
<div class="tab on" style="left:2px;top:709px;width:78px;height:21px;border-color:#dfe3e8"></div>
<div class="tab" style="left:79px;top:709px;width:139px;height:21px"></div>
<div class="tab" style="left:217px;top:709px;width:56px;height:21px"></div>
<span class="t" style="left:14px;top:713px;letter-spacing:-0.415px">Bookmarks</span>
<span class="t" style="left:91px;top:713px;letter-spacing:-0.242px">Search/Replace Results</span>
<span class="t" style="left:230px;top:713px;letter-spacing:-0.230px">To Do</span>
</div>


<div id="hl" class="a" style="left:235px;top:88px;width:1117px;height:625px;border:3px solid #ff8000;border-right-width:3px"></div>
<div id="callout" class="a" style="left:694px;top:27px;width:198px;height:50px;background:#fff;border:3px solid #ff8000;border-radius:7px"></div>
<span class="t" style="left:732.500px;top:44px;font-size:15px;line-height:18px;height:18px;color:#ff8000;letter-spacing:0.192px">Workspace panel</span>

</body>
</html>
